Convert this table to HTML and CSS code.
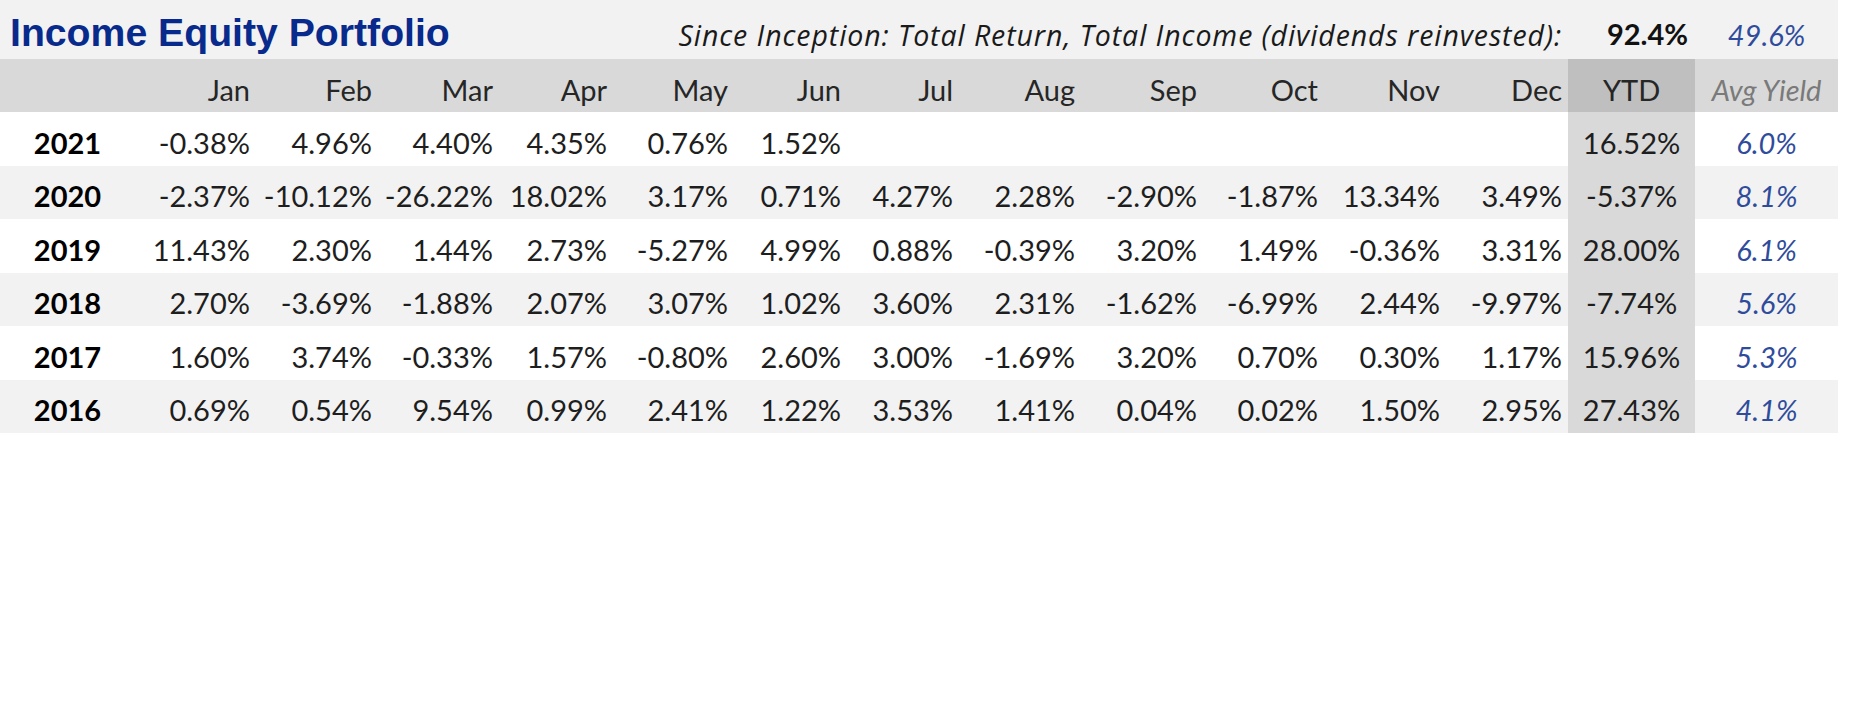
FILE: index.html
```html
<!DOCTYPE html>
<html lang="en">
<head>
<meta charset="utf-8">
<title>Income Equity Portfolio</title>
<link rel="stylesheet" href="styles.css">
</head>
<body>
<table class="perf">
  <colgroup>
    <col class="w-year"><col class="w121"><col class="w122"><col class="w121"><col class="w114">
    <col class="w121"><col class="w113"><col class="w112"><col class="w122"><col class="w122">
    <col class="w121"><col class="w122"><col class="w122"><col class="w-ytd"><col class="w-avg">
  </colgroup>
  <tr class="band">
    <td colspan="5" class="title">Income Equity Portfolio</td>
    <td colspan="8" class="since">Since Inception: Total Return, Total Income (dividends reinvested):</td>
    <td class="total">92.4%</td>
    <td class="yield">49.6%</td>
  </tr>
  <tr class="head">
    <th></th>
    <th>Jan</th><th>Feb</th><th>Mar</th><th>Apr</th><th>May</th><th>Jun</th>
    <th>Jul</th><th>Aug</th><th>Sep</th><th>Oct</th><th>Nov</th><th>Dec</th>
    <th class="ytd">YTD</th><th class="avg">Avg Yield</th>
  </tr>
  <tr class="row">
    <td class="year">2021</td>
    <td>-0.38%</td><td>4.96%</td><td>4.40%</td><td>4.35%</td><td>0.76%</td><td>1.52%</td>
    <td></td><td></td><td></td><td></td><td></td><td></td>
    <td class="ytd">16.52%</td><td class="yield">6.0%</td>
  </tr>
  <tr class="row alt">
    <td class="year">2020</td>
    <td>-2.37%</td><td>-10.12%</td><td>-26.22%</td><td>18.02%</td><td>3.17%</td><td>0.71%</td>
    <td>4.27%</td><td>2.28%</td><td>-2.90%</td><td>-1.87%</td><td>13.34%</td><td>3.49%</td>
    <td class="ytd">-5.37%</td><td class="yield">8.1%</td>
  </tr>
  <tr class="row">
    <td class="year">2019</td>
    <td>11.43%</td><td>2.30%</td><td>1.44%</td><td>2.73%</td><td>-5.27%</td><td>4.99%</td>
    <td>0.88%</td><td>-0.39%</td><td>3.20%</td><td>1.49%</td><td>-0.36%</td><td>3.31%</td>
    <td class="ytd">28.00%</td><td class="yield">6.1%</td>
  </tr>
  <tr class="row alt">
    <td class="year">2018</td>
    <td>2.70%</td><td>-3.69%</td><td>-1.88%</td><td>2.07%</td><td>3.07%</td><td>1.02%</td>
    <td>3.60%</td><td>2.31%</td><td>-1.62%</td><td>-6.99%</td><td>2.44%</td><td>-9.97%</td>
    <td class="ytd">-7.74%</td><td class="yield">5.6%</td>
  </tr>
  <tr class="row">
    <td class="year">2017</td>
    <td>1.60%</td><td>3.74%</td><td>-0.33%</td><td>1.57%</td><td>-0.80%</td><td>2.60%</td>
    <td>3.00%</td><td>-1.69%</td><td>3.20%</td><td>0.70%</td><td>0.30%</td><td>1.17%</td>
    <td class="ytd">15.96%</td><td class="yield">5.3%</td>
  </tr>
  <tr class="row alt">
    <td class="year">2016</td>
    <td>0.69%</td><td>0.54%</td><td>9.54%</td><td>0.99%</td><td>2.41%</td><td>1.22%</td>
    <td>3.53%</td><td>1.41%</td><td>0.04%</td><td>0.02%</td><td>1.50%</td><td>2.95%</td>
    <td class="ytd">27.43%</td><td class="yield">4.1%</td>
  </tr>
</table>
</body>
</html>
```
FILE: styles.css
```css
html, body {
  margin: 0;
  padding: 0;
  background: #ffffff;
}

.perf {
  width: 1838px;
  table-layout: fixed;
  border-collapse: collapse;
  border-spacing: 0;
  font-family: Lato, "Open Sans", sans-serif;
  font-size: 29px;
  line-height: 1.2;
  color: #1e1e1e;
}

.w-year { width: 135px; }
.w112 { width: 112px; }
.w113 { width: 113px; }
.w114 { width: 114px; }
.w121 { width: 121px; }
.w122 { width: 122px; }
.w-ytd { width: 127px; }
.w-avg { width: 143px; }

.perf td,
.perf th {
  padding: 0 6px 5px 0;
  text-align: right;
  vertical-align: bottom;
  white-space: nowrap;
  font-weight: normal;
}

/* title band */
.band {
  height: 59px;
  background: #f2f2f2;
}

.band .title {
  text-align: left;
  padding: 0 0 3px 10px;
  font-family: "Liberation Sans", Arial, sans-serif;
  font-weight: bold;
  font-size: 39.2px;
  color: #082a8c;
  overflow: visible;
}

.band .since {
  font-family: "Open Sans", Lato, sans-serif;
  font-style: italic;
  font-size: 28.5px;
  letter-spacing: 0.92px;
  line-height: 1.3;
  padding-right: 6px;
  padding-bottom: 5px;
  color: #1a1a1a;
}

.band .total {
  font-weight: bold;
  color: #111111;
  padding-right: 7px;
  padding-bottom: 7px;
}

.band .yield {
  padding-bottom: 6px;
}

/* header row */
.head {
  height: 53px;
  background: #d9d9d9;
}

.head th {
  color: #262626;
  padding-bottom: 4px;
}

.head .ytd {
  background: #bfbfbf;
  text-align: center;
  padding-right: 0;
}

.head .avg {
  text-align: center;
  padding-right: 0;
  font-style: italic;
  color: #7a7a7a;
}

/* data rows */
.row {
  height: 53.5px;
  background: #ffffff;
}

.row.alt {
  background: #f2f2f2;
}

.row .year {
  text-align: center;
  padding-right: 0;
  font-weight: bold;
  color: #000000;
}

.row .ytd {
  background: #d9d9d9;
  text-align: center;
  padding-right: 0;
}

.yield {
  text-align: center !important;
  padding-right: 0 !important;
  font-style: italic;
  color: #2f4c9c;
}
```
